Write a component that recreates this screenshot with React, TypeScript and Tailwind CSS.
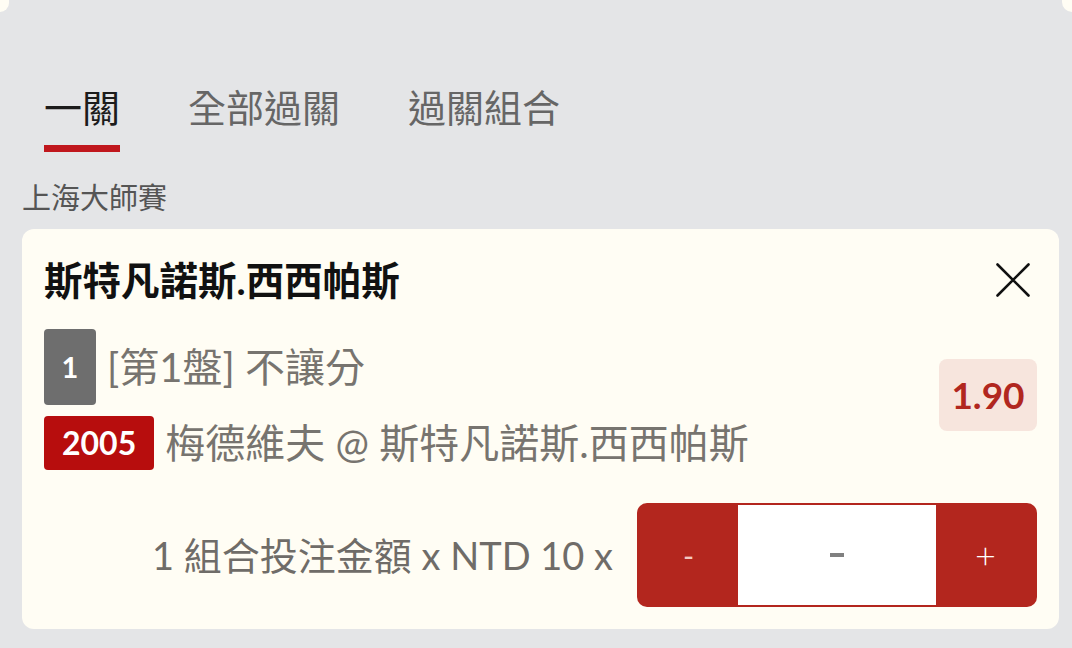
const font = { fontFamily: 'Lato, "Noto Sans CJK TC", sans-serif' }

const tabs = ['一關', '全部過關', '過關組合']

export default function App() {
  return (
    <div className="w-[1072px] h-[648px] overflow-hidden bg-[#e4e5e7]" style={font}>
      {/* edges of neighbouring cards */}
      <div className="flex justify-between h-[12px]">
        <div className="w-[9px] h-[12px] bg-[#fffdf4] rounded-br-[12px]" />
        <div className="w-[10px] h-[12px] bg-[#fffdf4] rounded-bl-[12px]" />
      </div>

      {/* Tabs */}
      <div className="flex gap-[68px] pl-[44px] pt-[76px]">
        {tabs.map((t, i) => (
          <div key={t} className="flex flex-col">
            <span
              className={`text-[38px] leading-[38px] ${i === 0 ? 'text-[#1c1c1c]' : 'text-[#666666]'}`}
            >
              {t}
            </span>
            <div className={`mt-[19px] h-[7px] ${i === 0 ? 'bg-[#c0171d]' : 'bg-transparent'}`} />
          </div>
        ))}
      </div>

      <div className="pl-[22px] mt-[31px] text-[29px] leading-[30px] text-[#555555]">上海大師賽</div>

      {/* Bet card */}
      <div className="ml-[22px] mr-[13px] mt-[16px] bg-[#fffdf4] rounded-[12px] px-[22px] pt-[28px] pb-[22px]">
        <div className="flex items-center justify-between">
          <h3 className="text-[38.5px] leading-[46px] font-bold text-[#111111]">斯特凡諾斯.西西帕斯</h3>
          <svg width="34" height="34" viewBox="0 0 34 34" className="mr-[7px]">
            <path d="M1.5 1.5 L32.5 32.5 M32.5 1.5 L1.5 32.5" stroke="#111111" strokeWidth="2.6" strokeLinecap="round" />
          </svg>
        </div>

        <div className="flex items-center justify-between mt-[26px]">
          <div className="flex flex-col gap-[11px]">
            <div className="flex items-center gap-[11px]">
              <span className="w-[52px] h-[76px] rounded-[4px] bg-[#6e6e6e] text-white font-bold text-[29px] flex items-center justify-center">
                1
              </span>
              <span className="text-[40px] leading-[44px] text-[#77746f]">[第1盤] 不讓分</span>
            </div>
            <div className="flex items-center gap-[11px]">
              <span className="h-[54px] px-[18px] rounded-[4px] bg-[#b70d0d] text-white font-bold text-[32px] leading-[54px]">
                2005
              </span>
              <span className="text-[40px] leading-[44px] text-[#77746f]">梅德維夫 @ 斯特凡諾斯.西西帕斯</span>
            </div>
          </div>
          <div className="w-[98px] h-[72px] mb-[10px] rounded-[8px] bg-[#f7e5dd] flex items-center justify-center text-[37px] font-bold text-[#b1271f]">
            1.90
          </div>
        </div>

        <div className="flex items-center justify-end gap-[24px] mt-[33px]">
          <span className="text-[38px] text-[#6f6c68]">1 組合投注金額 x NTD 10 x</span>
          <div className="w-[400px] h-[104px] rounded-[10px] bg-[#b3261e] p-[2px] flex">
            <button className="w-[99px] flex items-center justify-center text-[30px] text-[#f3c9c2]">-</button>
            <div className="flex-1 bg-white flex items-center justify-center">
              <span className="w-[14px] h-[4px] bg-[#808080]" />
            </div>
            <button className="w-[99px] flex items-center justify-center text-[36px] font-light text-white">+</button>
          </div>
        </div>
      </div>
    </div>
  )
}
